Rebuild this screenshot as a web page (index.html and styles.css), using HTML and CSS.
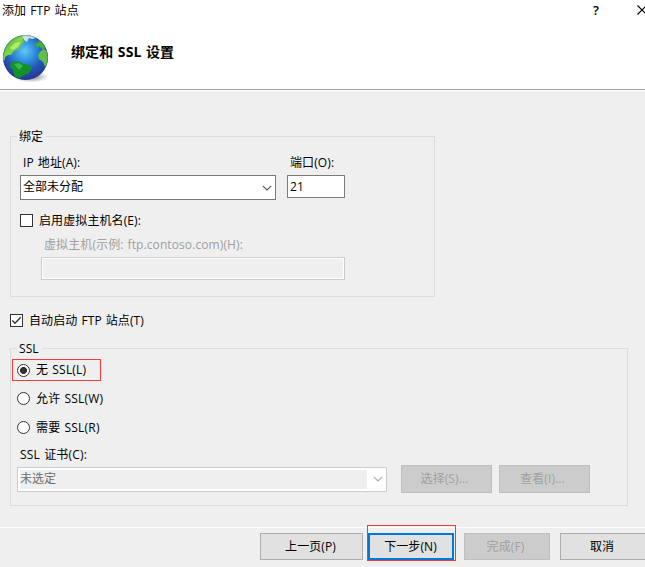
FILE: index.html
```html
<!DOCTYPE html>
<html lang="zh-CN">
<head>
<meta charset="utf-8">
<title>添加 FTP 站点</title>
<link rel="stylesheet" href="styles.css">
</head>
<body>
<div class="dialog">
  <header class="header">
    <div class="titlebar">
      <span class="caption">添加 FTP 站点</span>
      <span class="help">?</span>
      <svg class="close" width="10" height="10" viewBox="0 0 10 10"><path d="M.5 .5l9 9M9.500 .5l-9 9" stroke="#000" stroke-width="1.1" fill="none"/></svg>
    </div>
    <div class="banner">
      <svg class="globe" width="50" height="52" viewBox="0 0 50 52">
        <defs>
          <radialGradient id="sea" cx=".48" cy=".36" r=".62">
            <stop offset="0" stop-color="#62c8f2"/><stop offset=".32" stop-color="#3597df"/><stop offset=".68" stop-color="#2355b8"/><stop offset="1" stop-color="#263a90"/>
          </radialGradient>
          <linearGradient id="land" x1="0" y1="0" x2="1" y2="1">
            <stop offset="0" stop-color="#3aa52d"/><stop offset=".5" stop-color="#7ed84a"/><stop offset="1" stop-color="#2f9c35"/>
          </linearGradient>
          <radialGradient id="shade"><stop offset="0" stop-color="#555" stop-opacity=".8"/><stop offset="1" stop-color="#777" stop-opacity="0"/></radialGradient>
          <clipPath id="disc"><circle cx="25.500" cy="26.500" r="22.500"/></clipPath>
        </defs>
        <ellipse cx="31" cy="46" rx="18" ry="5.500" fill="url(#shade)"/>
        <circle cx="25.500" cy="26.500" r="22.500" fill="url(#sea)"/>
        <g clip-path="url(#disc)">
          <path d="M2 24L4 14l7-8 9-3 5 1-2 4 1 3-3 3-2 4-5 2-3 4-3 0-3 2 0 3-3 1z" fill="url(#land)"/>
          <path d="M11 32l4-2 5 1 3 2 6 1 3 3-3 5-5 2-4 3-5-1-2-7-3-3z" fill="#129228"/>
          <path d="M14 33l5-1 4 3-4 4z" fill="#37b84a"/>
          <path d="M38 8l4 2 4 6-3 3-3-3-3-2 2-3z" fill="#45ad3d"/>
          <path d="M40 21l4-3 4 3 1 9-4 6-2-5-4-3-1-4z" fill="#62bf48"/>
          <path d="M22 4l9 0 5 3-4 1-3-1-2 4-3-2z" fill="#c9e6dc"/>
          <path d="M10 17l5-5 6-1-3 5-5 3z" fill="#b3ec62"/>
          <path d="M35 13l3-2 2 4-3 2z" fill="#3cad3a"/>
        </g>
        <circle cx="25.500" cy="26.500" r="22" fill="none" stroke="#294486" stroke-opacity=".35"/>
      </svg>
      <h1>绑定和 SSL 设置</h1>
    </div>
  </header>

  <main class="content">
    <section class="group binding">
      <h2>绑定</h2>
      <div class="fields">
        <div class="field">
          <label>IP 地址(A):</label>
          <div class="combo address"><span>全部未分配</span><svg width="10" height="6" viewBox="0 0 10 6"><path d="M.8 .8L5 4.900 9.200 .8" fill="none" stroke="#555" stroke-width="1.1"/></svg></div>
        </div>
        <div class="field">
          <label>端口(O):</label>
          <div class="input port">21</div>
        </div>
      </div>
      <div class="option host"><i class="checkbox"></i><span>启用虚拟主机名(E):</span></div>
      <div class="hostlabel">虚拟主机(示例: ftp.contoso.com)(H):</div>
      <div class="input disabled"></div>
    </section>

    <div class="option autostart"><i class="checkbox"><svg width="11" height="11" viewBox="0 0 11 11"><path d="M1.300 5.500L4 8.200 9.700 2.300" fill="none" stroke="#333" stroke-width="1.400"/></svg></i><span>自动启动 FTP 站点(T)</span></div>

    <section class="group ssl">
      <h2>SSL</h2>
      <div class="radios">
        <div class="option marked"><i class="radio on"></i><span>无 SSL(L)</span></div>
        <div class="option"><i class="radio"></i><span>允许 SSL(W)</span></div>
        <div class="option"><i class="radio"></i><span>需要 SSL(R)</span></div>
      </div>
      <div class="certlabel">SSL 证书(C):</div>
      <div class="certrow">
        <div class="combo certificate"><span>未选定</span><svg width="10" height="6" viewBox="0 0 10 6"><path d="M.8 .8L5 4.900 9.200 .8" fill="none" stroke="#aaa" stroke-width="1.1"/></svg></div>
        <div class="button off small">选择(S)...</div>
        <div class="button off small">查看(I)...</div>
      </div>
    </section>
  </main>

  <footer class="footer">
    <div class="button back">上一页(P)</div>
    <div class="focus"><div class="button next">下一步(N)</div></div>
    <div class="button off finish">完成(F)</div>
    <div class="button cancel">取消</div>
  </footer>
</div>
</body>
</html>
```
FILE: styles.css
```css
* { box-sizing: border-box; }
body { margin: 0; overflow: hidden; }
.dialog {
  width: 645px;
  height: 567px;
  overflow: hidden;
  background: #efefef;
  color: #000;
  font: 12px/16px "Open Sans", "Noto Sans CJK SC", sans-serif;
  letter-spacing: .1px;
  word-spacing: .8px;
  white-space: nowrap;
}
.header {
  height: 91px;
  background: #fff;
  border-bottom: 1px solid #fff;
  box-shadow: inset 0 -1px #a0a0a0;
}
.titlebar { display: flex; height: 30px; padding: 3px 0 0 2px; }
.caption { flex: none; width: 591px; }
.help { flex: none; width: 44px; font-size: 13px; font-weight: 600; line-height: 14px; }
.close { flex: none; margin-top: 2px; }
.banner { display: flex; }
.globe { flex: none; margin-top: 1px; }
h1 { margin: 12px 0 0 21px; font-size: 14px; line-height: 20px; font-weight: 700; }
.content { padding: 45px 0 0 10px; }
.group { border: 1px solid #dcdcdc; }
.group h2 {
  width: max-content;
  height: 16px;
  margin: -8px 0 0 6px;
  padding: 0 3px 0 2px;
  background: #efefef;
  font-size: 12px;
  font-weight: 400;
}
.binding { width: 425px; height: 161px; }
.fields { display: flex; gap: 11px; padding: 10px 0 0 9px; }
.field label { display: block; height: 20px; padding-left: 3px; }
.combo {
  display: flex;
  align-items: center;
  height: 25px;
  border: 1px solid #7a7a7a;
  background: #fff;
  padding: 0 3px 0 2px;
}
.combo span { flex: 1; margin-top: -2px; }
.address { width: 256px; letter-spacing: 0; }
.input { height: 23px; border: 1px solid #7a7a7a; background: #fff; line-height: 21px; padding-left: 2px; }
.port { width: 58px; }
.option { display: flex; align-items: center; gap: 6px; }
.host { height: 17px; margin: 12px 0 0 9px; }
.checkbox, .radio { flex: none; width: 13px; height: 13px; border: 1px solid #333; background: #fff; }
.checkbox svg { display: block; }
.hostlabel { height: 16px; margin: 8px 0 0 33px; color: #a0a0a0; }
.disabled { width: 304px; margin: 4px 0 0 30px; border-color: #ccc; background: #efefef; box-shadow: inset 0 0 0 1px #fff; }
.autostart { height: 17px; margin-top: 15px; }
.ssl { width: 618px; height: 158px; margin-top: 19px; }
.radios { display: flex; flex-direction: column; gap: 7px; padding: 2px 0 0 1px; }
.radios .option { width: 89px; height: 22px; padding-left: 5px; letter-spacing: .2px; }
.radios .marked { border: 1px solid #f33b3b; padding-left: 4px; }
.radios .option:not(.marked) { height: 21px; margin-bottom: 1px; }
.radio { border-radius: 50%; }
.on { background: radial-gradient(circle, #333 0 3.2px, #fff 3.8px); }
.certlabel { margin: 8px 0 0 9px; letter-spacing: .2px; }
.certrow { display: flex; align-items: center; margin: 2px 0 0 6px; }
.certificate { width: 370px; margin-right: 14px; border-color: #ccc; color: #6d6d6d; letter-spacing: 0; }
.certificate span { height: 19px; margin: 0 6px 0 0; line-height: 17px; background: #efefef; }
.button {
  display: flex;
  flex: none;
  align-items: center;
  justify-content: center;
  height: 27px;
  border: 1px solid #adadad;
  background: #e1e1e1;
}
.off { border-color: #bfbfbf; background: #ccc; color: #a0a0a0; }
.small { width: 91px; height: 28px; margin-right: 7px; padding-right: 4px; }
.footer { display: flex; margin-top: 21px; padding: 5px 0 0 260px; border-top: 1px solid #fff; }
.back { width: 103px; padding-right: 2px; }
.focus { flex: none; width: 89px; height: 36px; margin: -8px 8px 0 4px; padding: 7px 0 0; border: 1px solid #f33b3b; }
.next { width: 86px; height: 27px; padding-right: 1px; border: 2px solid #0078d7; }
.finish { width: 86px; margin-right: 10px; padding-right: 3px; }
.cancel { width: 86px; padding-right: 2px; }
```
